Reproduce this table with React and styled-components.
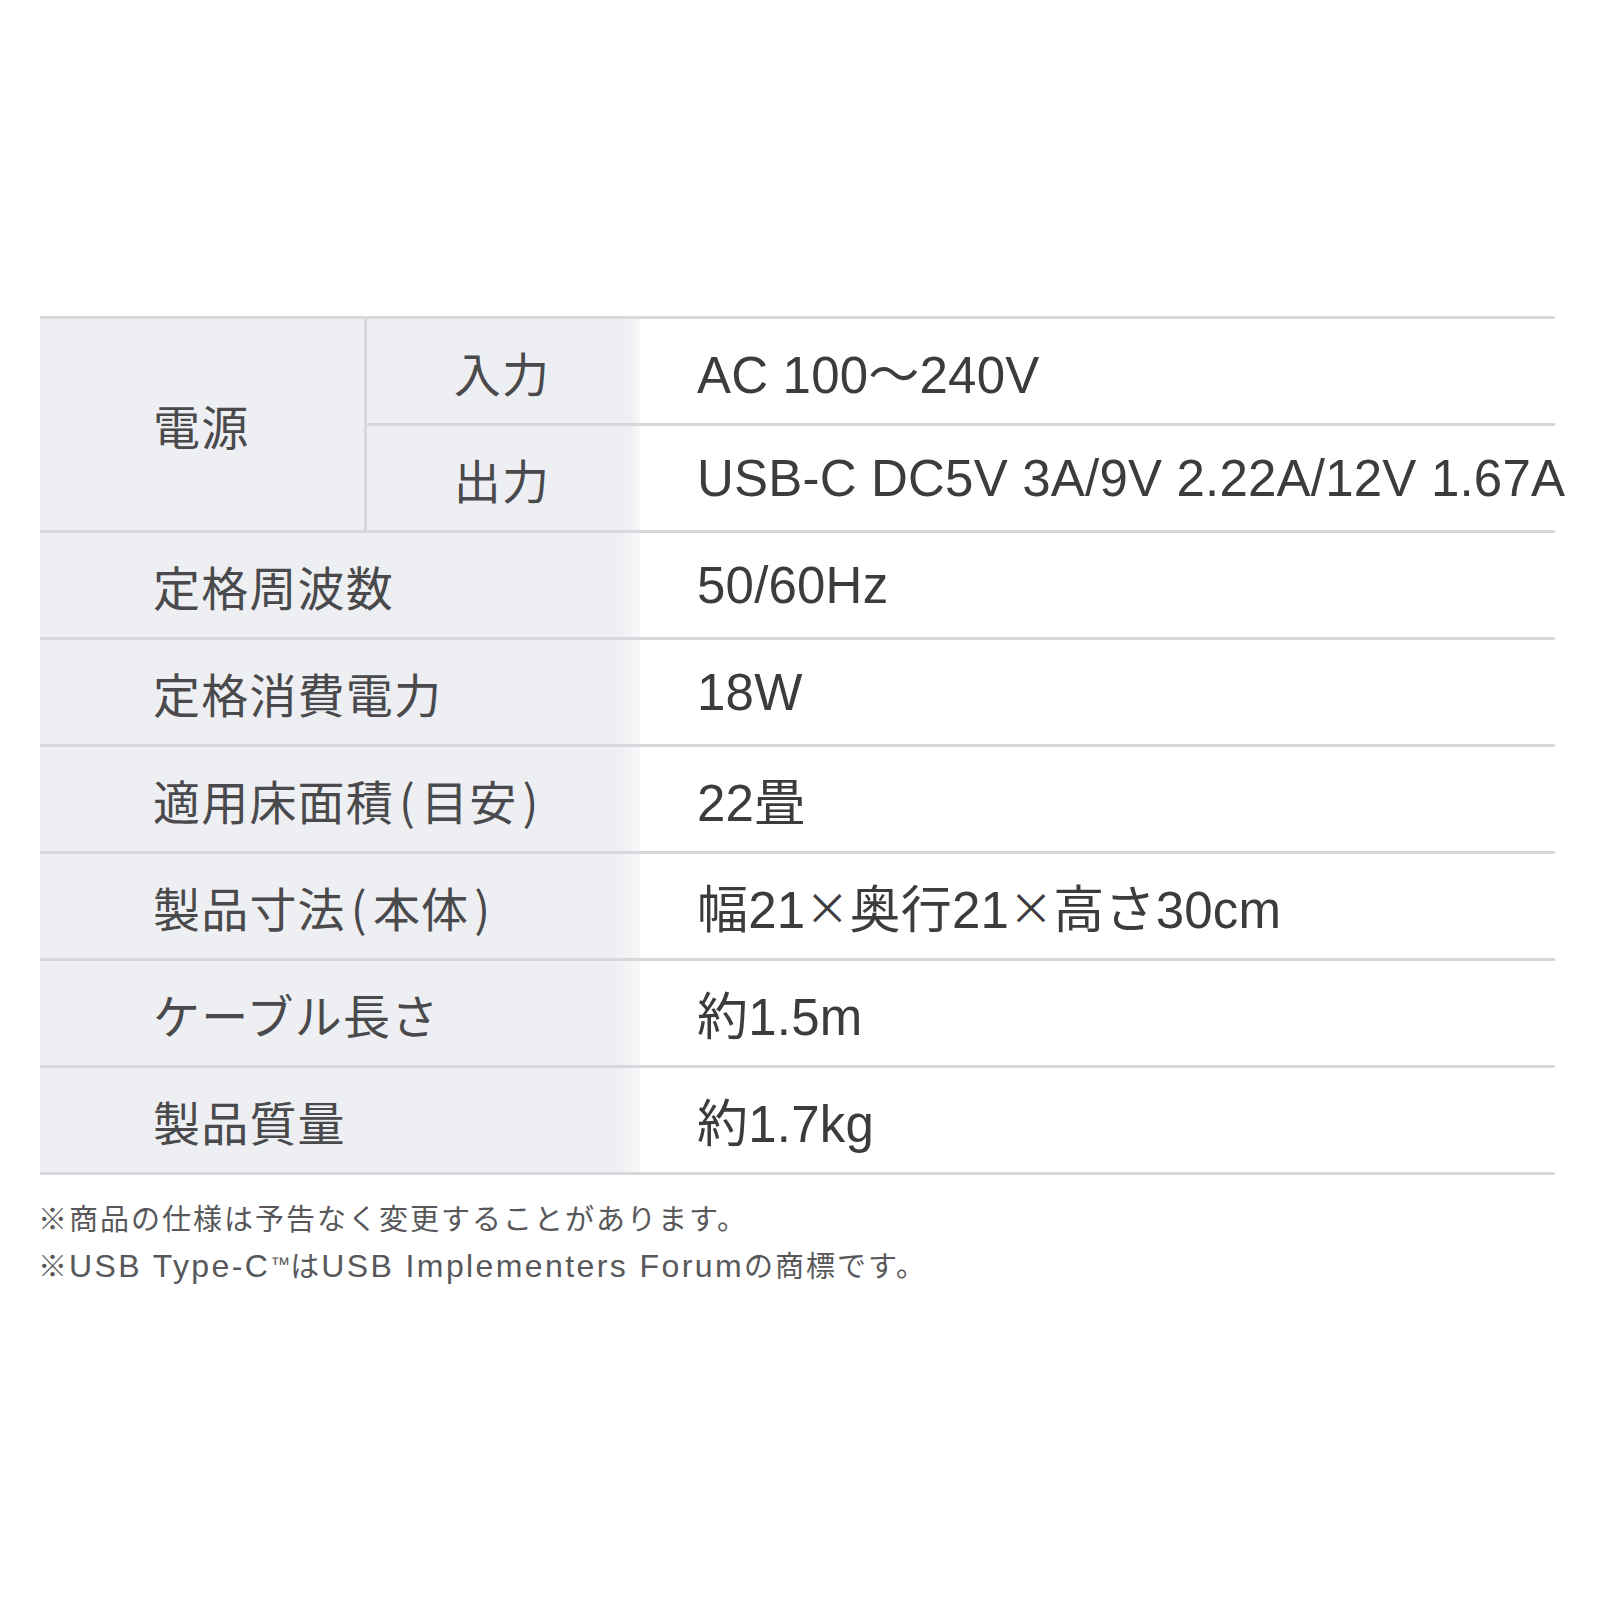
import React from 'react';
import styled, { createGlobalStyle } from 'styled-components';

const GlobalStyle = createGlobalStyle`
  html, body {
    margin: 0;
    padding: 0;
    background: #ffffff;
  }
  body {
    font-family: "Liberation Sans", "Noto Sans CJK JP", sans-serif;
  }
`;

const Page = styled.div`
  width: 1600px;
  height: 1600px;
  box-sizing: border-box;
  padding: 316px 45px 0 40px;
  background: #ffffff;
`;

const Table = styled.div`
  display: grid;
  grid-template-columns: 327px 273px minmax(0, 1fr);
  grid-auto-rows: 107px;
  border-top: 3px solid #dadadd;
`;

const labelBg = `linear-gradient(to right, #eeeff2 0%, #eeeff2 96%, #f6f7f8 100%)`;

const Label = styled.div`
  grid-column: ${p => (p.$group ? 'span 1' : 'span 2')};
  grid-row: ${p => (p.$group ? 'span 2' : 'span 1')};
  display: flex;
  align-items: center;
  padding-left: 113px;
  background: ${p => (p.$group ? '#eeeff2' : labelBg)};
  border-bottom: 3px solid #d8d8dc;
  border-right: ${p => (p.$group ? '3px solid #d8d8dc' : 'none')};
  font-family: "Noto Sans CJK JP", sans-serif;
  font-size: 47px;
  color: #4a4a4c;
  letter-spacing: 1.2px;
  white-space: nowrap;
`;

const Paren = styled.span`
  margin: 0 5px;
`;

const SubLabel = styled.div`
  display: flex;
  align-items: center;
  justify-content: center;
  background: ${labelBg};
  border-bottom: 3px solid #d8d8dc;
  font-family: "Noto Sans CJK JP", sans-serif;
  font-size: 47px;
  color: #4a4a4c;
  letter-spacing: 1.2px;
  padding-right: 3px;
`;

const Value = styled.div`
  display: flex;
  align-items: center;
  padding-left: 57px;
  border-bottom: 3px solid #d8d8dc;
  font-family: "Liberation Sans", "Noto Sans CJK JP", sans-serif;
  font-size: 51px;
  color: #3c3c3e;
  letter-spacing: 0.2px;
  white-space: nowrap;
  overflow: visible;
`;

const Cross = styled.span`
  font-family: "Noto Sans CJK JP", sans-serif;
  font-size: 44px;
`;

const Notes = styled.div`
  display: flex;
  flex-direction: column;
  gap: 14px;
  margin-top: 26px;
  margin-left: -2px;
`;

const Note = styled.p`
  margin: 0;
  font-family: "Noto Sans CJK JP", sans-serif;
  font-size: 29px;
  line-height: 33px;
  color: #58585a;
  letter-spacing: 2px;
  white-space: nowrap;
`;

const Latin = styled.span`
  font-family: "Liberation Sans", sans-serif;
  font-size: 32px;
  letter-spacing: 2.4px;
`;

const Tm = styled.span`
  font-family: "Liberation Sans", sans-serif;
  font-size: 20px;
  letter-spacing: 0;
  vertical-align: 6px;
`;

const withCross = text =>
  text.split('×').flatMap((part, i) => (i === 0 ? [part] : [<Cross key={i}>×</Cross>, part]));

const withParens = text =>
  text.split(/([()])/).map((part, i) => (part === '(' || part === ')' ? <Paren key={i}>{part}</Paren> : part));

const rows = [
  { label: '定格周波数', value: '50/60Hz' },
  { label: '定格消費電力', value: '18W' },
  { label: '適用床面積(目安)', value: '22畳' },
  { label: '製品寸法(本体)', value: '幅21×奥行21×高さ30cm' },
  { label: 'ケーブル長さ', value: '約1.5m' },
  { label: '製品質量', value: '約1.7kg' },
];

export default function App() {
  return (
    <Page>
      <GlobalStyle />
      <Table>
        <Label $group>電源</Label>
        <SubLabel>入力</SubLabel>
        <Value>AC 100〜240V</Value>
        <SubLabel>出力</SubLabel>
        <Value>USB-C DC5V 3A/9V 2.22A/12V 1.67A</Value>
        {rows.map(r => (
          <React.Fragment key={r.label}>
            <Label>{withParens(r.label)}</Label>
            <Value>{withCross(r.value)}</Value>
          </React.Fragment>
        ))}
      </Table>
      <Notes>
        <Note>※商品の仕様は予告なく変更することがあります。</Note>
        <Note>
          ※<Latin>USB Type-C</Latin><Tm>™</Tm>は<Latin>USB Implementers Forum</Latin>の商標です。
        </Note>
      </Notes>
    </Page>
  );
}
